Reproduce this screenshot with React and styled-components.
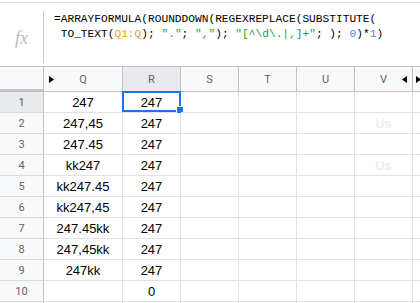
import React from "react";
import styled, { createGlobalStyle } from "styled-components";

const GlobalStyle = createGlobalStyle`
  html, body {
    margin: 0;
    padding: 0;
    background: #fff;
    overflow: hidden;
  }
  body {
    font-family: "Liberation Sans", Arial, sans-serif;
  }
`;

const rows = [
  ["247", "247", ""],
  ["247,45", "247", "Us"],
  ["247.45", "247", ""],
  ["kk247", "247", "Us"],
  ["kk247.45", "247", ""],
  ["kk247,45", "247", ""],
  ["247.45kk", "247", ""],
  ["247,45kk", "247", ""],
  ["247kk", "247", ""],
  ["", "0", ""],
];

const columns = ["Q", "R", "S", "T", "U", "V"];

const Page = styled.div`
  padding-top: 2px;
  height: 303px;
  box-sizing: border-box;
  overflow: hidden;
`;

const FormulaBar = styled.div`
  display: flex;
  align-items: flex-start;
  height: 65px;
  box-sizing: border-box;
  border-top: 1px solid #e3e3e3;
  border-bottom: 1px solid #c4c4c4;
`;

const FxBox = styled.div`
  width: 43px;
  display: flex;
  justify-content: center;
  padding-top: 26px;
  font-family: "Liberation Serif", "Times New Roman", serif;
  font-style: italic;
  font-size: 18px;
  line-height: 18px;
  color: #bcbcbc;
`;

const Divider = styled.div`
  width: 1px;
  height: 52px;
  margin-top: 8px;
  background: #c8c8c8;
`;

const Formula = styled.div`
  padding: 9px 0 0 10px;
  font-family: "Liberation Mono", "Courier New", monospace;
  font-size: 11.2px;
  line-height: 15px;
  color: #000;
  white-space: pre;
`;

const Tok = styled.span`
  color: ${(p) =>
    p.$kind === "ref" ? "#f29b1d" : p.$kind === "str" ? "#1e9e3e" : p.$kind === "num" ? "#4a86e8" : "#000"};
`;

const Grid = styled.div`
  display: grid;
  grid-template-columns: 44px 79px 58px 58px 58px 58px 58px 1fr;
  grid-template-rows: 25px;
  grid-auto-rows: 21px;
`;

const Corner = styled.div`
  background: #f8f9fa;
  box-sizing: border-box;
  border-right: 1px solid #bdbdbd;
  border-bottom: 3px solid #c2c2c2;
`;

const ColHead = styled.div`
  position: relative;
  display: flex;
  align-items: center;
  justify-content: ${(p) => (p.$start ? "flex-start" : "center")};
  padding-left: ${(p) => (p.$start ? "3px" : "0")};
  box-sizing: border-box;
  background: ${(p) => (p.$active ? "#e8eaed" : "#f8f9fa")};
  border-right: 1px solid #c4c4c4;
  border-bottom: 1px solid #c0c0c0;
  font-family: "Roboto", "Liberation Sans", sans-serif;
  font-size: 11px;
  color: #5f6368;
`;

const Arrow = styled.svg`
  position: absolute;
  top: 9px;
  ${(p) => (p.$side === "left" ? "left: 5px;" : "right: 5px;")}
`;

const RowHead = styled.div`
  display: flex;
  align-items: center;
  justify-content: center;
  box-sizing: border-box;
  background: ${(p) => (p.$active ? "#e8eaed" : "#f8f9fa")};
  border-right: 1px solid #c4c4c4;
  border-bottom: 1px solid #dadada;
  font-family: "Roboto", "Liberation Sans", sans-serif;
  font-size: 11px;
  color: #5f6368;
`;

const Cell = styled.div`
  position: relative;
  display: flex;
  align-items: center;
  justify-content: center;
  box-sizing: border-box;
  border-right: 1px solid #e2e2e2;
  border-bottom: 1px solid #e2e2e2;
  font-size: 13px;
  color: ${(p) => (p.$ghost ? "#eeeeee" : "#000")};
  font-weight: ${(p) => (p.$ghost ? 700 : 400)};
  padding-top: 1px;
`;

const Selection = styled.div`
  position: absolute;
  left: -1px;
  top: -1px;
  right: -1px;
  bottom: 0;
  border: 2px solid #1a73e8;
  pointer-events: none;
`;

const Handle = styled.div`
  position: absolute;
  right: -5px;
  bottom: -4px;
  width: 6px;
  height: 6px;
  background: #1a73e8;
  border: 1px solid #fff;
`;

const RightTri = () => (
  <svg width="5" height="7" viewBox="0 0 5 7">
    <path d="M0 0 L5 3.5 L0 7 Z" fill="#000" />
  </svg>
);

const App = () => {
  return (
    <Page>
      <GlobalStyle />
      <FormulaBar>
        <FxBox>fx</FxBox>
        <Divider />
        <Formula>
          {"=ARRAYFORMULA(ROUNDDOWN(REGEXREPLACE(SUBSTITUTE(\n TO_TEXT("}
          <Tok $kind="ref">Q1:Q</Tok>
          {"); "}
          <Tok $kind="str">"."</Tok>
          {"; "}
          <Tok $kind="str">","</Tok>
          {"); "}
          <Tok $kind="str">"[^\d\.|,]+"</Tok>
          {"; ); "}
          <Tok $kind="num">0</Tok>
          {")*"}
          <Tok $kind="num">1</Tok>
          {")"}
        </Formula>
      </FormulaBar>

      <Grid>
        <Corner />
        {columns.map((c) => (
          <ColHead key={c} $active={c === "R"}>
            {c === "Q" && (
              <Arrow $side="left" width="5" height="7" viewBox="0 0 5 7">
                <path d="M0 0 L5 3.5 L0 7 Z" fill="#000" />
              </Arrow>
            )}
            {c === "V" && (
              <Arrow $side="right" width="5" height="7" viewBox="0 0 5 7">
                <path d="M5 0 L0 3.5 L5 7 Z" fill="#000" />
              </Arrow>
            )}
            {c}
          </ColHead>
        ))}
        <ColHead $start>
          <RightTri />
        </ColHead>

        {rows.map((r, i) => (
          <React.Fragment key={i}>
            <RowHead $active={i === 0}>{i + 1}</RowHead>
            <Cell>{r[0]}</Cell>
            <Cell>
              {r[1]}
              {i === 0 && (
                <Selection>
                  <Handle />
                </Selection>
              )}
            </Cell>
            <Cell />
            <Cell />
            <Cell />
            <Cell $ghost>{r[2]}</Cell>
            <Cell />
          </React.Fragment>
        ))}
        <RowHead />
        <Cell />
        <Cell />
        <Cell />
        <Cell />
        <Cell />
        <Cell />
        <Cell />
      </Grid>
    </Page>
  );
};

export default App;
